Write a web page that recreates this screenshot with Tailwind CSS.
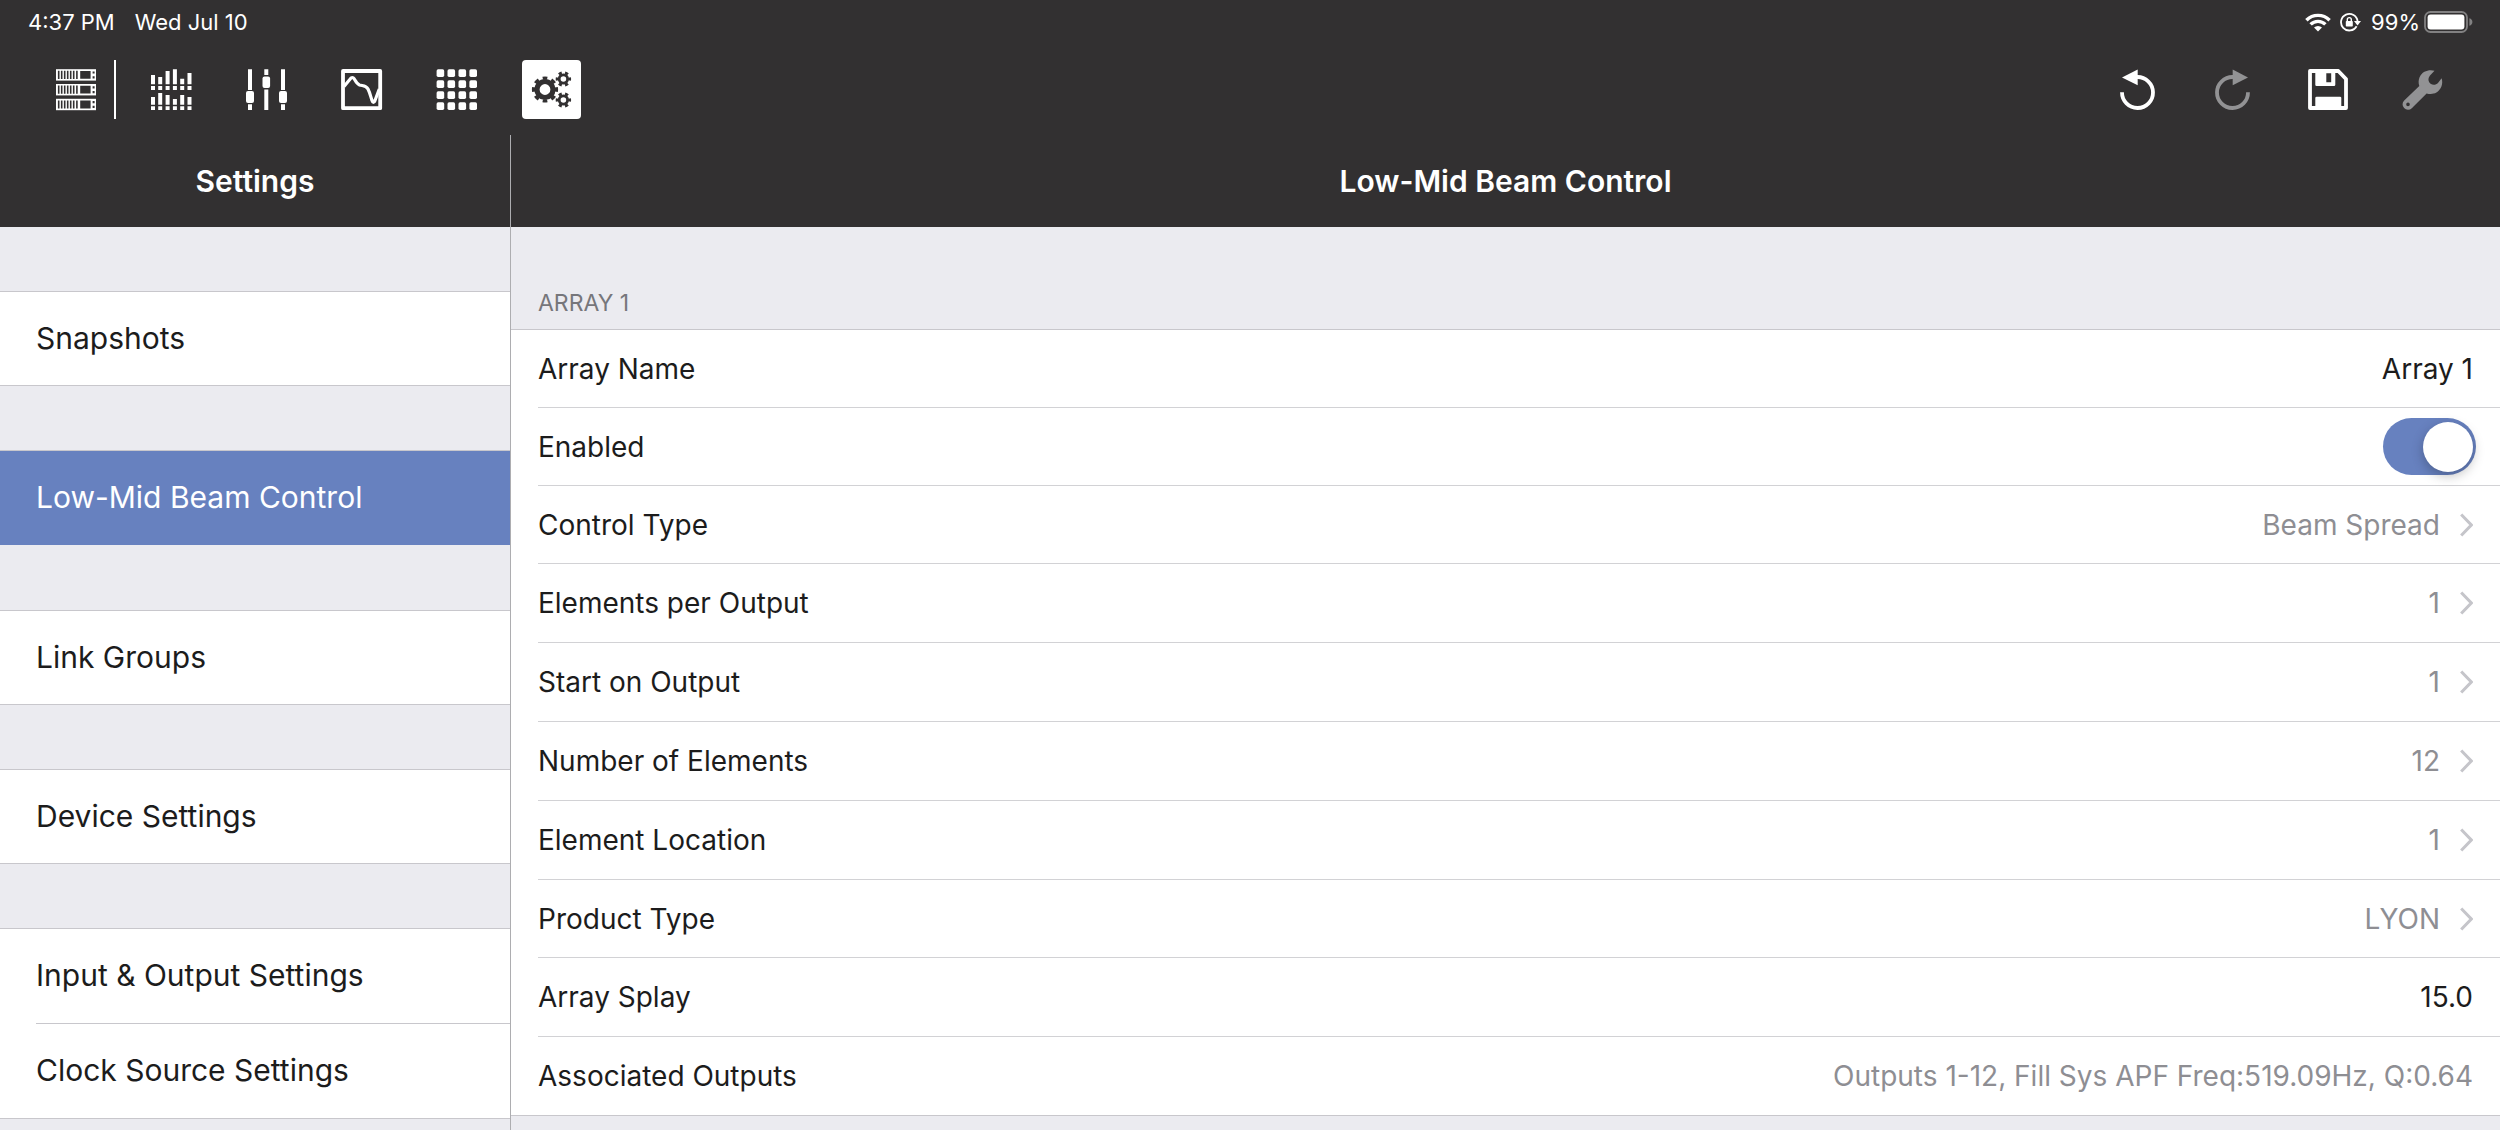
<!DOCTYPE html>
<html lang="en">

<head>
    <meta charset="UTF-8">
    <meta name="viewport" content="width=device-width, initial-scale=1.0">
    <title>Low-Mid Beam Control</title>
    <script src="https://cdn.jsdelivr.net/npm/@tailwindcss/browser@4"></script>
</head>

<body class="h-screen flex flex-col overflow-hidden bg-[#ebebf0] text-[#1c1c1c] font-['Inter',sans-serif]">
    <!-- Status bar and toolbar -->
    <header class="shrink-0 bg-[#323031] text-white">
        <div class="flex h-11 items-center justify-between pl-7 pr-[27px] text-[22px] leading-7">
            <div class="flex gap-5">
                <span>4:37 PM</span>
                <span>Wed Jul 10</span>
            </div>
            <div class="flex items-center">
                <svg class="h-[19px] w-[26px]" viewBox="0 0 26 19" fill="none" stroke="#fff" stroke-width="3.4">
                    <path d="M1.4 7.2A16.4 16.4 0 0 1 24.6 7.2" />
                    <path d="M5.6 11.4A10.5 10.5 0 0 1 20.4 11.4" />
                    <path d="M9 14.6A5.8 5.8 0 0 1 17 14.6L13 18.6Z" fill="#fff" stroke="none" />
                </svg>
                <svg class="ml-[9px] h-5 w-[21px]" viewBox="0 0 21 20" fill="none" stroke="#fff" stroke-width="1.8">
                    <path d="M16.6 14.2A8.3 8.3 0 1 1 17.6 9.4" />
                    <path d="M14 9H21L17.5 13.6Z" fill="#fff" stroke="none" />
                    <rect x="5.8" y="9" width="7" height="5.6" rx="0.8" fill="#fff" stroke="none" />
                    <path d="M7.3 9.5V7.6a2 2 0 0 1 4 0V9.5" stroke-width="1.4" />
                </svg>
                <span class="ml-2.5">99%</span>
                <svg class="ml-1 h-[22px] w-[49px]" viewBox="0 0 49 22" fill="none">
                    <rect x="1" y="1" width="42" height="20" rx="5.5" stroke="#828182" stroke-width="1.8" />
                    <rect x="3.6" y="3.4" width="36.8" height="15.2" rx="3" fill="#fff" />
                    <path d="M45.4 7.2C49.4 8.4 49.4 13.6 45.4 14.8Z" fill="#828182" />
                </svg>
            </div>
        </div>

        <div class="flex items-center justify-between px-[47px] py-4">
            <nav class="flex items-center" aria-label="Views">
                <button class="size-[59px]" aria-label="Devices">
                    <svg viewBox="0 0 59 59">
                        <defs>
                            <g id="rack-unit">
                                <rect width="40" height="11.4" fill="#fff" />
                                <path d="M2.7 1.6V9.8M5.7 1.6V9.8M8.7 1.6V9.8M11.7 1.6V9.8M14.7 1.6V9.8M17.7 1.6V9.8M20.9 1.6V9.8" stroke="#323031" stroke-width="1.6" />
                                <path d="M24.2 1.8H34.6V9.6H24.2ZM36.6 2.2H38.6V4.4H36.6ZM36.6 7H38.6V9.2H36.6Z" fill="#323031" />
                            </g>
                        </defs>
                        <use href="#rack-unit" x="9" y="9.2" />
                        <use href="#rack-unit" x="9" y="24" />
                        <use href="#rack-unit" x="9" y="38.8" />
                    </svg>
                </button>
                <div class="ml-2 h-[59px] w-0.5 bg-white"></div>
                <div class="ml-[26px] flex gap-9">
                    <button class="size-[59px]" aria-label="Equalizers">
                        <svg viewBox="0 0 59 59" stroke="#fff" stroke-width="4">
                            <path d="M11 15V24.3M18.2 17V24.3M25.6 11V24.3M32.9 9.2V24.3M40.2 18.8V24.3M47.5 13V24.3" />
                            <path d="M11 26V30M18.2 26V30M25.6 26V30M32.9 26V30M40.2 26V30M47.5 26V30" />
                            <path d="M11 37V44.8M18.2 33V44.8M25.6 35V44.8M32.9 39V44.8M40.2 35V44.8M47.5 37V44.8" />
                            <path d="M11 46.2V50M18.2 46.2V50M25.6 46.2V50M32.9 46.2V50M40.2 46.2V50M47.5 46.2V50" />
                        </svg>
                    </button>
                    <button class="size-[59px]" aria-label="Faders">
                        <svg viewBox="0 0 59 59" fill="#fff">
                            <path d="M11 9.2H15V30H11ZM11 44.2H15V50H11ZM27.3 9.2H31.3V15H27.3ZM27.3 29.4H31.3V50H27.3ZM44 9.2H48V30H44ZM44 44.2H48V50H44Z" />
                            <rect x="9" y="31" width="8" height="12" rx="2" />
                            <rect x="25.5" y="16.5" width="7.6" height="11.6" rx="2" />
                            <rect x="42" y="31" width="8" height="12" rx="2" />
                        </svg>
                    </button>
                    <button class="size-[59px]" aria-label="Response">
                        <svg viewBox="0 0 59 59" fill="none" stroke="#fff" stroke-width="3.8" stroke-linejoin="round">
                            <rect x="11" y="11" width="37.2" height="37.2" />
                            <path d="M12 26.5L18.2 19Q20.3 16 22.3 19C24 22 25 24 27.5 25C30.5 26 34 25 36 29C38 33 38.5 36 40 40.5Q41.3 44.5 43 40.5L47.3 29" stroke-width="3.2" />
                        </svg>
                    </button>
                    <button class="size-[59px]" aria-label="Matrix">
                        <svg viewBox="0 0 59 59" fill="#fff">
                            <defs>
                                <g id="matrix-row">
                                    <rect x="9.6" width="7.6" height="7.6" rx="1.6" />
                                    <rect x="20.5" width="7.6" height="7.6" rx="1.6" />
                                    <rect x="31.5" width="7.6" height="7.6" rx="1.6" />
                                    <rect x="42.4" width="7.6" height="7.6" rx="1.6" />
                                </g>
                            </defs>
                            <use href="#matrix-row" y="9.3" />
                            <use href="#matrix-row" y="20.3" />
                            <use href="#matrix-row" y="31.3" />
                            <use href="#matrix-row" y="42.3" />
                        </svg>
                    </button>
                    <button class="size-[59px] rounded bg-white" aria-label="Settings" aria-pressed="true">
                        <svg viewBox="0 0 59 59" fill="none" stroke="#323031">
                            <circle cx="23" cy="29.5" r="8" stroke-width="5.2" />
                            <circle cx="23" cy="29.5" r="11.5" stroke-width="3.2" pathLength="80" stroke-dasharray="5.2 4.8" stroke-dashoffset="2.6" />
                            <circle cx="41.4" cy="19" r="4.2" stroke-width="2.8" />
                            <circle cx="41.4" cy="19" r="6.3" stroke-width="2.8" pathLength="60" stroke-dasharray="4.8 5.2" stroke-dashoffset="2.4" />
                            <circle cx="41.4" cy="40" r="4.2" stroke-width="2.8" />
                            <circle cx="41.4" cy="40" r="6.3" stroke-width="2.8" pathLength="60" stroke-dasharray="4.8 5.2" stroke-dashoffset="2.4" />
                        </svg>
                    </button>
                </div>
            </nav>

            <div class="flex gap-9">
                <button class="size-[59px]" aria-label="Undo">
                    <svg viewBox="0 0 59 59" fill="none">
                        <path d="M13 32.3A15.5 15.5 0 1 0 28 17" stroke="#fff" stroke-width="3.8" />
                        <path d="M13 17.4L28.7 9.5V25.3Z" fill="#fff" />
                    </svg>
                </button>
                <button class="size-[59px]" aria-label="Redo" disabled>
                    <svg viewBox="0 0 59 59" fill="none">
                        <path d="M44 32.3A15.5 15.5 0 1 1 29 17" stroke="#929294" stroke-width="3.8" />
                        <path d="M44 17.4L28.7 9.5V25.3Z" fill="#929294" />
                    </svg>
                </button>
                <button class="size-[59px]" aria-label="Save">
                    <svg viewBox="0 0 59 59" fill="#fff">
                        <path d="M11 11H39.3L47 19V48H11Z" fill="none" stroke="#fff" stroke-width="3.8" stroke-linejoin="round" />
                        <path fill-rule="evenodd" d="M16.3 10H36.3V24.8Q36.3 26 35 26H17.6Q16.3 26 16.3 24.8ZM27.3 13.2H32.2V22.2H27.3Z" />
                        <path d="M16.3 49V38Q16.3 36.7 17.6 36.7H41Q42.3 36.7 42.3 38V49Z" />
                    </svg>
                </button>
                <button class="size-[59px]" aria-label="Tools" disabled>
                    <svg viewBox="0 0 59 59" fill="#929294">
                        <path fill-rule="evenodd" d="M40.5 10.8L36 15.6C33.6 18.6 34.2 22 36.6 23.8C39 25.4 42 25 44 23L47.6 18.2C49.6 24 46.6 30 42.4 32.6C39.4 34.3 35.8 34.4 32.6 33.4L17.8 48.2A5.4 5.4 0 0 1 10.2 40.4L25.3 26C23.4 20 26 14.4 30.4 11.8C33.8 9.9 37.4 9.7 40.5 10.8ZM14 42.6A1.8 1.8 0 1 0 14 46.2A1.8 1.8 0 1 0 14 42.6Z" />
                    </svg>
                </button>
            </div>
        </div>
    </header>

    <div class="flex min-h-0 grow">
        <!-- Sidebar -->
        <aside class="flex w-[511px] shrink-0 flex-col border-r border-[#adadb0]">
            <h2 class="flex h-[92px] shrink-0 items-center justify-center bg-[#323031] text-[30px] leading-10 font-semibold text-white">Settings</h2>
            <nav class="flex flex-col text-[30px] leading-10" aria-label="Settings">
                <a href="#" class="mt-16 flex h-[95px] items-center border-y border-[#c8c7cc] bg-white pb-0.5 pl-9">Snapshots</a>
                <a href="#" class="mt-16 flex h-[95px] items-center border-y border-t-[#c8c7cc] border-b-[#6781bf] bg-[#6781bf] pb-0.5 pl-9 text-white" aria-current="page">Low-Mid Beam Control</a>
                <a href="#" class="mt-[65px] flex h-[95px] items-center border-y border-[#c8c7cc] bg-white pb-0.5 pl-9">Link Groups</a>
                <a href="#" class="mt-16 flex h-[95px] items-center border-y border-[#c8c7cc] bg-white pb-0.5 pl-9">Device Settings</a>
                <div class="mt-16 border-y border-[#c8c7cc] bg-white pl-9">
                    <a href="#" class="flex h-[95px] items-center border-b border-[#c8c7cc] pb-0.5">Input &amp; Output Settings</a>
                    <a href="#" class="flex h-[94px] items-center pb-0.5">Clock Source Settings</a>
                </div>
            </nav>
        </aside>

        <!-- Detail pane -->
        <main class="min-w-0 grow">
            <h1 class="flex h-[92px] items-center justify-center bg-[#323031] text-[30px] leading-10 font-semibold text-white">Low-Mid Beam Control</h1>
            <h2 class="flex h-[102px] items-end pb-3 pl-[27px] text-[23px] leading-7 text-[#76767b]">ARRAY 1</h2>
            <div class="border-y border-[#c8c7cc] bg-white pl-[27px] text-[28px] leading-9">
                <div class="flex h-[78px] items-center justify-between border-b border-[#d2d2d5] pr-[27px]">
                    <label for="array-name">Array Name</label>
                    <input id="array-name" type="text" value="Array 1" class="w-96 text-right outline-none">
                </div>
                <div class="flex h-[78px] items-center justify-between border-b border-[#d2d2d5] pr-6">
                    <label for="enabled">Enabled</label>
                    <input id="enabled" type="checkbox" role="switch" checked class="flex h-[57px] w-[93px] appearance-none items-center rounded-full bg-[#c8c7cc] px-[3px] before:size-[50px] before:rounded-full before:bg-white before:shadow-[0_4px_12px_rgba(0,0,0,0.25)] checked:justify-end checked:bg-[#6781bf]">
                </div>
                <button class="flex h-[78px] w-full items-center justify-between border-b border-[#d2d2d5] pr-[27px]">
                    <span>Control Type</span>
                    <span class="flex items-center gap-5 text-[#8e8e93]">Beam Spread
                        <svg class="h-6 w-[13px]" viewBox="0 0 13 24" fill="none" stroke="#c5c5ca" stroke-width="3"><path d="M1.2 1.5L11.3 12L1.2 22.5" /></svg>
                    </span>
                </button>
                <button class="flex h-[79px] w-full items-center justify-between border-b border-[#d2d2d5] pr-[27px]">
                    <span>Elements per Output</span>
                    <span class="flex items-center gap-5 text-[#8e8e93]">1
                        <svg class="h-6 w-[13px]" viewBox="0 0 13 24" fill="none" stroke="#c5c5ca" stroke-width="3"><path d="M1.2 1.5L11.3 12L1.2 22.5" /></svg>
                    </span>
                </button>
                <button class="flex h-[79px] w-full items-center justify-between border-b border-[#d2d2d5] pr-[27px]">
                    <span>Start on Output</span>
                    <span class="flex items-center gap-5 text-[#8e8e93]">1
                        <svg class="h-6 w-[13px]" viewBox="0 0 13 24" fill="none" stroke="#c5c5ca" stroke-width="3"><path d="M1.2 1.5L11.3 12L1.2 22.5" /></svg>
                    </span>
                </button>
                <button class="flex h-[79px] w-full items-center justify-between border-b border-[#d2d2d5] pr-[27px]">
                    <span>Number of Elements</span>
                    <span class="flex items-center gap-5 text-[#8e8e93]">12
                        <svg class="h-6 w-[13px]" viewBox="0 0 13 24" fill="none" stroke="#c5c5ca" stroke-width="3"><path d="M1.2 1.5L11.3 12L1.2 22.5" /></svg>
                    </span>
                </button>
                <button class="flex h-[79px] w-full items-center justify-between border-b border-[#d2d2d5] pr-[27px]">
                    <span>Element Location</span>
                    <span class="flex items-center gap-5 text-[#8e8e93]">1
                        <svg class="h-6 w-[13px]" viewBox="0 0 13 24" fill="none" stroke="#c5c5ca" stroke-width="3"><path d="M1.2 1.5L11.3 12L1.2 22.5" /></svg>
                    </span>
                </button>
                <button class="flex h-[78px] w-full items-center justify-between border-b border-[#d2d2d5] pr-[27px]">
                    <span>Product Type</span>
                    <span class="flex items-center gap-5 text-[#8e8e93]">LYON
                        <svg class="h-6 w-[13px]" viewBox="0 0 13 24" fill="none" stroke="#c5c5ca" stroke-width="3"><path d="M1.2 1.5L11.3 12L1.2 22.5" /></svg>
                    </span>
                </button>
                <div class="flex h-[79px] items-center justify-between border-b border-[#d2d2d5] pr-[27px]">
                    <label for="array-splay">Array Splay</label>
                    <input id="array-splay" type="text" inputmode="decimal" value="15.0" class="w-96 text-right outline-none">
                </div>
                <div class="flex h-[78px] items-center justify-between pr-[27px]">
                    <span>Associated Outputs</span>
                    <span class="text-[#8e8e93]">Outputs 1-12, Fill Sys APF Freq:519.09Hz, Q:0.64</span>
                </div>
            </div>
        </main>
    </div>
</body>

</html>
